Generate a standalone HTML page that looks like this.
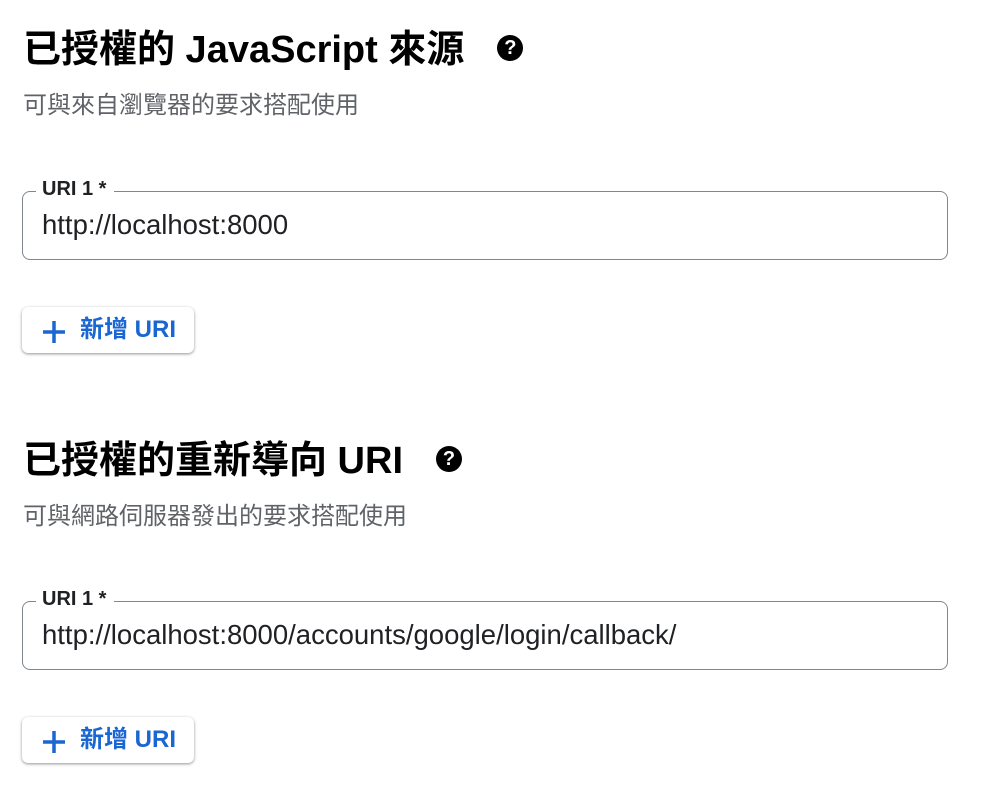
<!DOCTYPE html>
<html><head><meta charset="utf-8"><style>
body{margin:0;background:#fff;width:996px;height:810px;overflow:hidden;font-family:"Liberation Sans","Noto Sans CJK TC",sans-serif;position:relative}
.t{position:absolute;left:23px;font-size:38px;color:#000;white-space:nowrap;line-height:42px;font-weight:bold}
.q{display:inline-block;width:26px;height:26px;border-radius:50%;background:#000;color:#fff;font-size:20px;font-weight:bold;line-height:26px;text-align:center;vertical-align:middle;margin-left:33px;position:relative;top:-4px}
.s{position:absolute;left:23px;font-size:24px;color:#5f6368;line-height:26px;white-space:nowrap}
.box{position:absolute;left:22px;width:924px;height:67px;border:1.7px solid #80868b;border-radius:8px}
.lab{position:absolute;left:13px;top:-15px;background:#fff;padding:0 8px 0 6px;font-size:20px;color:#202124;line-height:24px;font-weight:bold}
.val{position:absolute;left:19px;top:18px;font-size:27.5px;color:#202124;line-height:30px;white-space:nowrap}
.btn{position:absolute;left:22px;width:172px;height:46px;border-radius:6px;box-shadow:0 1px 3px rgba(0,0,0,.3),0 1px 2px rgba(0,0,0,.15);color:#1a66d2;font-size:24px;line-height:46px;font-weight:bold}
.btn svg{position:absolute;left:20px;top:13px}
.btn span{position:absolute;left:58px;white-space:nowrap}
</style></head><body>
<div class="t" style="top:29px">已授權的 JavaScript 來源<span class="q">?</span></div>
<div class="s" style="top:93px">可與來自瀏覽器的要求搭配使用</div>
<div class="box" style="top:191px"><div class="lab">URI 1 *</div><div class="val">http://localhost:8000</div></div>
<div class="btn" style="top:307px"><svg width="24" height="24" viewBox="0 0 24 24"><path d="M12 1v22M1 12h22" stroke="#1a66d2" stroke-width="3.5"/></svg><span>新增 URI</span></div>
<div class="t" style="top:440px">已授權的重新導向 URI<span class="q">?</span></div>
<div class="s" style="top:504px">可與網路伺服器發出的要求搭配使用</div>
<div class="box" style="top:601px"><div class="lab">URI 1 *</div><div class="val">http://localhost:8000/accounts/google/login/callback/</div></div>
<div class="btn" style="top:717px"><svg width="24" height="24" viewBox="0 0 24 24"><path d="M12 1v22M1 12h22" stroke="#1a66d2" stroke-width="3.5"/></svg><span>新增 URI</span></div>
</body></html>
